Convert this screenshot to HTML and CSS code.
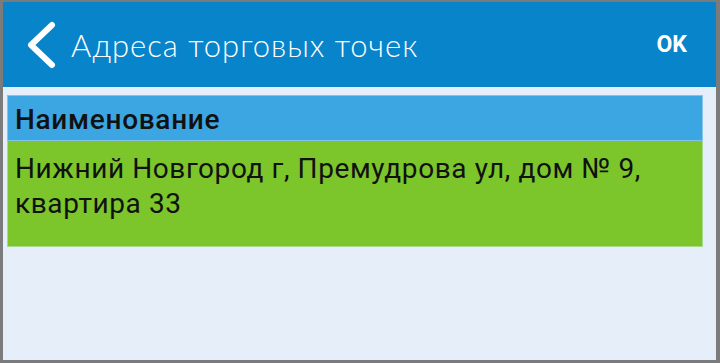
FILE: index.html
```html
<!DOCTYPE html>
<html lang="ru">
<head>
<meta charset="utf-8">
<link rel="stylesheet" href="styles.css">
</head>
<body>
<div class="frame">
  <header class="topbar">
    <div class="back">
      <svg width="34" height="48" viewBox="0 0 34 48"><path d="M27 4 L6 24 L27 44" fill="none" stroke="#fff" stroke-width="6" stroke-linecap="round" stroke-linejoin="round"/></svg>
    </div>
    <h1 class="title">Адреса торговых точек</h1>
    <div class="ok">OK</div>
  </header>
  <main class="content">
    <div class="table">
      <div class="row head">Наименование</div>
      <div class="row item">Нижний Новгород г, Премудрова ул, дом № 9, квартира 33</div>
    </div>
  </main>
</div>
</body>
</html>
```
FILE: styles.css
```css
html, body {
  margin: 0;
  padding: 0;
  width: 720px;
  height: 363px;
  overflow: hidden;
  background: #7b7b7b;
}
.frame {
  box-sizing: border-box;
  width: 720px;
  height: 363px;
  border-style: solid;
  border-color: #7b7b7b;
  border-width: 2px 4px 3px 3px;
  background: #e6eefa;
  display: flex;
  flex-direction: column;
}
.topbar {
  height: 85px;
  background: #0884ca;
  display: flex;
  align-items: center;
  color: #fff;
  flex-shrink: 0;
}
.back {
  width: 34px;
  height: 48px;
  margin-left: 22px;
}
.back svg { display: block; }
.title {
  margin: 0 0 0 12px;
  font-family: "Lato", sans-serif;
  font-weight: 300;
  font-size: 31px;
  letter-spacing: 1px;
  flex: 1;
}
.ok {
  font-family: Roboto, "Liberation Sans", sans-serif;
  font-weight: 700;
  font-size: 23px;
  margin-right: 29px;
}
.content {
  padding: 8px 13px 0 4px;
}
.table {
  border: 1px solid #83c3ea;
  font-family: Roboto, "Liberation Sans", sans-serif;
  color: #111;
}
.row.head {
  background: #3ba6e1;
  height: 45px;
  box-sizing: border-box;
  padding: 8px 0 0 7px;
  font-size: 28px;
  line-height: 32px;
  font-weight: 500;
  letter-spacing: 0.7px;
  border-bottom: 1px solid #83c3ea;
}
.item {
  background: #7cc52b;
  border: 1px solid #a9d98c;
  border-top: none;
  margin: 0 -1px -1px -1px;
  height: 106px;
  box-sizing: border-box;
  padding: 10px 0 0 7px;
  font-size: 28px;
  line-height: 35px;
  letter-spacing: 0.6px;
}
```
